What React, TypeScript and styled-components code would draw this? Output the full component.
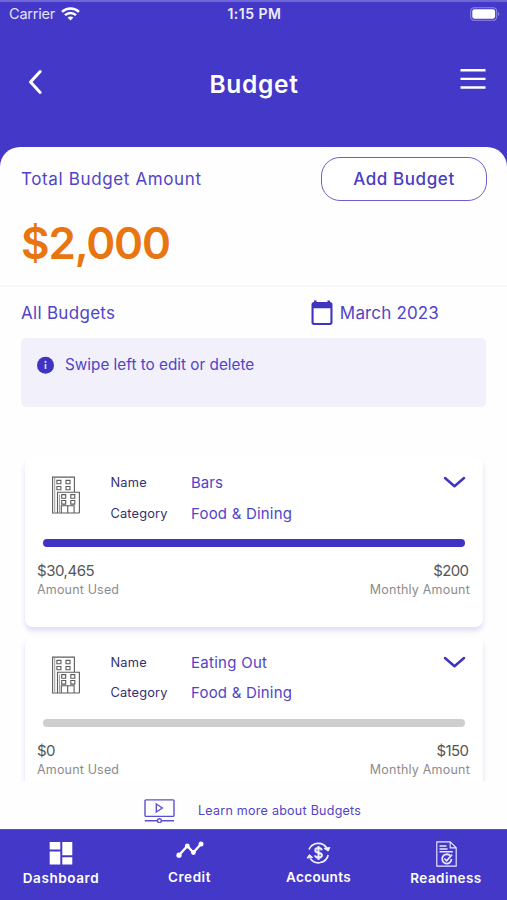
import React from 'react';
import styled, { createGlobalStyle } from 'styled-components';

const brand = '#4438c8';

const GlobalStyle = createGlobalStyle`
  * { box-sizing: border-box; }
  body { margin: 0; background: ${brand}; font-family: Inter, "Open Sans", sans-serif; }
  svg { display: block; flex: none; }
`;

const Screen = styled.div`
  width: 507px;
  height: 900px;
  display: flex;
  flex-direction: column;
  overflow: hidden;
  background: ${brand};
  border-top: 2px solid #6f66d6;
`;

const Text = styled.span<{ $size: number; $track?: number; $weight?: number; $color?: string }>`
  font-size: ${p => p.$size}px;
  letter-spacing: ${p => p.$track ?? 0}px;
  font-weight: ${p => p.$weight ?? 400};
  color: ${p => p.$color ?? '#5144c8'};
  line-height: 20px;
  white-space: nowrap;
`;

const StatusBar = styled.div`
  height: 24px;
  padding: 0 7px 0 9px;
  display: grid;
  grid-template-columns: 1fr auto 1fr;
  align-items: center;
`;

const Carrier = styled.div`
  display: flex;
  align-items: center;
  gap: 6px;
`;

const BatterySlot = styled.div`
  display: flex;
  justify-content: flex-end;
`;

const Header = styled.header`
  height: 121px;
  padding: 0 21px 10px 27px;
  display: grid;
  grid-template-columns: 1fr auto 1fr;
  align-items: center;
`;

const Title = styled.h1`
  margin: 5px 5px 0 0;
  font-size: 24.5px;
  line-height: 30px;
  font-weight: 600;
  letter-spacing: 0.7px;
  color: #fff;
`;

const IconButton = styled.button<{ $end?: boolean }>`
  padding: ${p => (p.$end ? '0 0 5px' : '0')};
  border: 0;
  background: none;
  justify-self: ${p => (p.$end ? 'end' : 'start')};
`;

const Sheet = styled.main`
  flex: 1;
  min-height: 0;
  display: flex;
  flex-direction: column;
  background: #fefefe;
  border-radius: 20px 20px 0 0;
`;

const Summary = styled.section`
  height: 140px;
  padding: 10px 20px 0 21px;
  border-bottom: 2px solid #f7f7f9;
`;

const SummaryRow = styled.div`
  display: flex;
  justify-content: space-between;
  align-items: center;
`;

const AddButton = styled.button`
  width: 166px;
  height: 44px;
  padding: 0;
  border: 1.5px solid #6c60cf;
  border-radius: 19px;
  background: #fff;
  font-family: inherit;
  font-size: 17px;
  font-weight: 500;
  letter-spacing: 0.59px;
  color: #4a3cc4;
`;

const Total = styled.div`
  margin-top: 17px;
  font-size: 44px;
  line-height: 50px;
  font-weight: 600;
  letter-spacing: -1.2px;
  color: #e87510;
`;

const ListHeader = styled.div`
  height: 51px;
  padding: 0 68px 0 21px;
  display: flex;
  justify-content: space-between;
  align-items: center;
`;

const Month = styled.div`
  display: flex;
  align-items: center;
  gap: 7px;
  padding-top: 1px;
`;

const Hint = styled.div`
  height: 69px;
  margin: 0 21px;
  padding: 17px 16px;
  display: flex;
  align-items: flex-start;
  gap: 11px;
  border-radius: 5px;
  background: #f2f0fa;
`;

const BudgetList = styled.div`
  flex: 1;
  min-height: 0;
  margin-top: 45px;
  padding: 5px 24px 0 25px;
  display: flex;
  flex-direction: column;
  gap: 9.5px;
  overflow: hidden;
`;

const Card = styled.article`
  flex: none;
  height: 170px;
  padding: 16px 13px 0 12px;
  border-radius: 8px;
  background: #fff;
  box-shadow: 0 4px 5px rgba(68, 56, 200, 0.16);
`;

const CardTop = styled.div`
  height: 66px;
  padding: 0 4px 0 15px;
  display: grid;
  grid-template-columns: 58.5px 80.5px 1fr auto;
  align-items: start;
`;

const Column = styled.div`
  display: flex;
  flex-direction: column;
  gap: 10.5px;
`;

const Track = styled.div<{ $filled: boolean }>`
  height: 8px;
  margin: 0 5.5px 0 6px;
  border-radius: 4px;
  background: ${p => (p.$filled ? '#4033c4' : '#cecece')};
`;

const Amounts = styled.div`
  margin-top: 14px;
  display: flex;
  justify-content: space-between;
`;

const Amount = styled.div<{ $end?: boolean }>`
  display: flex;
  flex-direction: column;
  align-items: ${p => (p.$end ? 'flex-end' : 'flex-start')};
  & > :first-child { margin-right: ${p => (p.$end ? '1.5px' : '0')}; }
  & > :last-child { margin-top: -1px; }
`;

const LearnMore = styled.a`
  height: 48px;
  padding: 12px 0 0 144px;
  display: flex;
  align-items: center;
  gap: 23px;
`;

const TabBar = styled.nav`
  height: 71px;
  flex: none;
  display: flex;
  border-top: 1px solid #5a4fce;
`;

const Tab = styled.div<{ $width: number; $gap: number }>`
  width: ${p => p.$width}px;
  flex: none;
  padding-top: 10.5px;
  display: flex;
  flex-direction: column;
  align-items: center;
  gap: ${p => p.$gap}px;
`;

const WifiIcon = () => (
  <svg width="19" height="14" viewBox="0 0 19 14" fill="none" stroke="#fff" strokeWidth="2.5">
    <path d="M1 4.800C5.800.4 13.200.4 18 4.800" />
    <path d="M4 8.200c3.200-3 7.800-3 11 0" />
    <path d="M9.500 13.400 6.600 10.500c1.600-1.500 4.200-1.500 5.800 0z" fill="#fff" stroke="none" />
  </svg>
);

const BatteryIcon = () => (
  <svg width="30" height="14" viewBox="0 0 30 14">
    <rect x=".7" y=".7" width="26" height="12.6" rx="3.6" fill="none" stroke="#8f88df" strokeWidth="1.1" />
    <rect x="2.3" y="2.3" width="22.8" height="9.4" rx="2.1" fill="#fff" />
    <path d="M28.2 5v4c1.4-.5 1.4-3.500 0-4z" fill="#9b94e2" />
  </svg>
);

const BackIcon = () => (
  <svg width="16" height="26" viewBox="0 0 16 26" fill="none" stroke="#fff" strokeWidth="3" strokeLinecap="round" strokeLinejoin="round">
    <path d="M13.200 2.500 3.500 13l9.700 10.500" />
  </svg>
);

const MenuIcon = () => (
  <svg width="26" height="22" viewBox="0 0 26 22" stroke="#fff" strokeWidth="2.4">
    <path d="M.5 2.200h25M.5 10.900h25M.5 19.500h25" />
  </svg>
);

const CalendarIcon = () => (
  <svg width="22" height="26" viewBox="0 0 22 26">
    <path d="M3 .5h2.500V2h11V.5H19V2c1.500.1 2.500 1 2.500 2.500v18c0 1.500-1 2.500-2.500 2.500H3C1.500 25 .5 24 .5 22.500v-18C.5 3 1.500 2.100 3 2zM2.600 8.300v13.900c0 .6.300.8.800.8h15.200c.5 0 .8-.2.800-.8V8.300z" fill="#4033bd" fillRule="evenodd" />
  </svg>
);

const InfoIcon = () => (
  <svg width="17" height="20" viewBox="0 0 17 20">
    <circle cx="8.500" cy="10.300" r="8.500" fill="#4033c4" />
    <circle cx="8.500" cy="6.900" r="1.050" fill="#d9d6f5" />
    <path d="M8.500 9v5" stroke="#d9d6f5" strokeWidth="1.700" />
  </svg>
);

const BuildingIcon = () => (
  <svg width="28" height="41" viewBox="0 -.5 28 41" fill="none" stroke="#5c5c5c" strokeWidth="1.100">
    <path d="M5.500 39.500H.6V3.600h21.800v15.200M.6 39.500h26.800M5.500 39.500V18.800h21.900v20.700" />
    <path d="M2.700 39V4.500M7.500 39V21" stroke="#a3a3a3" />
    <path d="M4.900 6.900h4v3.300h-4zM14 6.900h4v3.300h-4zM4.900 13h4v3.300h-4zM14 13h4v3.300h-4z" />
    <path d="M9.700 21.100h4v3.600h-4zM18.800 21.100h4v3.600h-4zM9.700 27h4v3.600h-4zM18.800 27h4v3.600h-4z" />
    <path d="M9.300 39.500v-7.200h12.800v7.200M15.700 32.300v7.200" />
  </svg>
);

const ChevronIcon = () => (
  <svg width="23" height="20" viewBox="0 0 23 20" fill="none" stroke="#4033bd" strokeWidth="2.500" strokeLinecap="round" strokeLinejoin="round">
    <path d="M2 5 11.500 13.200 21 5" />
  </svg>
);

const VideoIcon = () => (
  <svg width="31" height="24" viewBox="0 0 31 24" fill="none" stroke="#5c50c8" strokeWidth="1.400">
    <rect x="1" y=".9" width="29" height="16.500" rx="1" />
    <path d="M12.300 5v8l6-4zM.8 21.700h12.500M17.500 21.700H30" />
    <circle cx="15.400" cy="21.700" r="1.900" />
  </svg>
);

const DashboardIcon = () => (
  <svg width="24" height="24" viewBox="0 0 24 24" fill="#fff">
    <path d="M.7 1h10.600v7.500H.7zM13.300 1h10v13.200h-10zM.7 10.500h10.600v13H.7zM13.300 16.200h10v7.300h-10z" />
  </svg>
);

const CreditIcon = () => (
  <svg width="28" height="18" viewBox="0 0 28 18" fill="#fff" stroke="#fff">
    <path d="M3 14.200 11.300 5l6.100 6.500L25 2.900" fill="none" strokeWidth="2.300" />
    <g stroke="none">
      <circle cx="3" cy="14.200" r="2.600" />
      <circle cx="11.300" cy="5" r="2.400" />
      <circle cx="17.400" cy="11.500" r="2.400" />
      <circle cx="25" cy="2.900" r="2.500" />
    </g>
  </svg>
);

const AccountsIcon = () => (
  <svg width="25" height="24" viewBox="0 0 25 24" fill="none" stroke="#f0effc" strokeWidth="1.700">
    <path d="M3 8.500A10 10 0 0 1 20.700 7M22.200 14A10 10 0 0 1 4.300 17.500" />
    <path d="m18 7.300 5.900-.8-1.700 3.600zM1 17.100l2.400-3.500 3.300 2.800z" fill="#f0effc" strokeWidth="1" />
    <path d="M15.800 9.200c-.3-1.400-1.400-2.100-3.300-2.100-2 0-3.200.9-3.200 2.300 0 3.300 6.600 1.500 6.600 4.900 0 1.600-1.300 2.400-3.400 2.400-2 0-3.200-.8-3.500-2.300M12.500 5v14" strokeWidth="2" />
  </svg>
);

const ReadinessIcon = () => (
  <svg width="21" height="26" viewBox="0 0 21 26" fill="none" stroke="#e9e7fb" strokeWidth="1.150">
    <path d="M.8.8h13.400l6 6v18.300H.8zM14.200.8v6h6" />
    <path d="M3.500 5h7M3.500 8h8M3.500 10.700h13.300" strokeWidth="1.400" />
    <path d="M14.200 14.700A4.700 4.700 0 1 0 15.500 18" strokeWidth="1.800" />
    <path d="m8.300 17.500 2.300 2.300 5.500-6.200" strokeWidth="1.600" />
  </svg>
);

interface Budget {
  name: string;
  nameTrack: number;
  used: string;
  usedTrack: number;
  monthly: string;
  filled: boolean;
}

const budgets: Budget[] = [
  { name: 'Bars', nameTrack: 0, used: '$30,465', usedTrack: -0.45, monthly: '$200', filled: true },
  { name: 'Eating Out', nameTrack: 0.28, used: '$0', usedTrack: -0.6, monthly: '$150', filled: false },
];

const BudgetCard = ({ budget }: { budget: Budget }) => (
  <Card>
    <CardTop>
      <BuildingIcon />
      <Column>
        <Text $size={12.8} $track={0.2} $color="#35306f">Name</Text>
        <Text $size={12.8} $track={0.15} $color="#35306f">Category</Text>
      </Column>
      <Column>
        <Text $size={15} $track={budget.nameTrack}>{budget.name}</Text>
        <Text $size={15} $track={0.2}>Food &amp; Dining</Text>
      </Column>
      <ChevronIcon />
    </CardTop>
    <Track $filled={budget.filled} />
    <Amounts>
      <Amount>
        <Text $size={15} $track={budget.usedTrack} $color="#555">{budget.used}</Text>
        <Text $size={12.5} $track={0.17} $color="#8c8c8c">Amount Used</Text>
      </Amount>
      <Amount $end>
        <Text $size={15} $track={-0.6} $color="#555">{budget.monthly}</Text>
        <Text $size={12.5} $track={0.21} $color="#8c8c8c">Monthly Amount</Text>
      </Amount>
    </Amounts>
  </Card>
);

export default function App() {
  return (
    <>
      <GlobalStyle />
      <Screen>
        <StatusBar>
          <Carrier>
            <Text $size={14.5} $track={-0.2} $color="#e3e1fa">Carrier</Text>
            <WifiIcon />
          </Carrier>
          <Text $size={14} $track={0.5} $weight={600} $color="#eeedfc">1:15 PM</Text>
          <BatterySlot><BatteryIcon /></BatterySlot>
        </StatusBar>
        <Header>
          <IconButton aria-label="Back"><BackIcon /></IconButton>
          <Title>Budget</Title>
          <IconButton $end aria-label="Menu"><MenuIcon /></IconButton>
        </Header>
        <Sheet>
          <Summary>
            <SummaryRow>
              <Text $size={17} $track={0.63}>Total Budget Amount</Text>
              <AddButton>Add Budget</AddButton>
            </SummaryRow>
            <Total>$2,000</Total>
          </Summary>
          <ListHeader>
            <Text $size={17} $track={0.3}>All Budgets</Text>
            <Month>
              <CalendarIcon />
              <Text $size={17} $track={0.16}>March 2023</Text>
            </Month>
          </ListHeader>
          <Hint>
            <InfoIcon />
            <Text $size={15.3} $track={0}>Swipe left to edit or delete</Text>
          </Hint>
          <BudgetList>
            {budgets.map(b => <BudgetCard key={b.name} budget={b} />)}
          </BudgetList>
          <LearnMore>
            <VideoIcon />
            <Text $size={12.5} $track={0.26}>Learn more about Budgets</Text>
          </LearnMore>
        </Sheet>
        <TabBar>
          <Tab $width={122} $gap={3.5}>
            <DashboardIcon />
            <Text $size={13.5} $track={0.6} $weight={600} $color="#fff">Dashboard</Text>
          </Tab>
          <Tab $width={135} $gap={8.5}>
            <CreditIcon />
            <Text $size={13.5} $track={0.56} $weight={600} $color="#fff">Credit</Text>
          </Tab>
          <Tab $width={123} $gap={2.5}>
            <AccountsIcon />
            <Text $size={13.5} $track={0.33} $weight={600} $color="#fff">Accounts</Text>
          </Tab>
          <Tab $width={132} $gap={1.5}>
            <ReadinessIcon />
            <Text $size={13.5} $track={0.43} $weight={600} $color="#fff">Readiness</Text>
          </Tab>
        </TabBar>
      </Screen>
    </>
  );
}
